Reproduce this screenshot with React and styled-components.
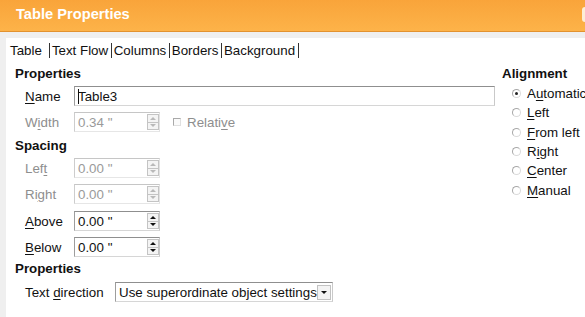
import React from "react";
import styled, { createGlobalStyle, css } from "styled-components";

const Global = createGlobalStyle`
  html, body { margin: 0; padding: 0; background: #efefef; }
  body { font-family: "Liberation Sans", Arial, sans-serif; }
  #root { width: 585px; height: 317px; overflow: hidden; }
`;

const Window = styled.div`
  width: 585px;
  height: 317px;
  display: flex;
  flex-direction: column;
  background: #efefef;
  font-family: "Liberation Sans", Arial, sans-serif;
  font-size: 13.33px;
  color: #111;
  overflow: hidden;
`;

const TitleBar = styled.div`
  height: 31px;
  flex: none;
  display: flex;
  align-items: flex-start;
  justify-content: space-between;
  background: linear-gradient(#f9a43a, #fdb349);
  border-bottom: 1px solid #e2922f;
  overflow: hidden;
`;

const Title = styled.div`
  padding: 5px 0 0 16px;
  line-height: 18px;
  font-size: 14.67px;
  font-weight: bold;
  color: #fff;
`;

const TitleButton = styled.div`
  width: 10px;
  height: 15px;
  margin: 7px -7px 0 0;
  border-radius: 3px;
  background: #fdeed6;
`;

const Body = styled.div`
  flex: 1;
  display: flex;
  padding: 6px 0 0 6px;
`;

const Panel = styled.div`
  flex: 1;
  display: flex;
  flex-direction: column;
  background: #fff;
`;

const TabStrip = styled.div`
  height: 24px;
  display: flex;
  align-items: center;
  padding-left: 4px;
`;

const Tab = styled.div`
  line-height: 15px;
  padding: 0 2.5px 0 2px;
  border-right: 1px solid #333;
  color: #111;
  ${(p) =>
    p.$active &&
    css`
      padding: 0 7px 0 0;
    `}
`;

const Content = styled.div`
  display: flex;
  gap: 6px;
`;

const LeftColumn = styled.div`
  width: 481px;
  padding-left: 9px;
  display: flex;
  flex-direction: column;
`;

const RightColumn = styled.div`
  flex: 1;
  display: flex;
  flex-direction: column;
`;

const Heading = styled.div`
  height: 20px;
  line-height: 20px;
  font-weight: bold;
  margin-top: ${(p) => p.$mt || 0}px;
`;

const FieldRow = styled.div`
  height: 20px;
  display: flex;
  align-items: center;
  padding-left: 10px;
  margin-top: ${(p) => p.$mt || 0}px;
`;

const Label = styled.div`
  width: ${(p) => p.$w || 49}px;
  flex: none;
  color: ${(p) => (p.$disabled ? "#8e8e8e" : "#111")};
`;

const Mn = styled.span`
  text-decoration: underline;
  text-underline-offset: 2px;
`;

const fieldBorder = css`
  box-sizing: border-box;
  height: 20px;
  border: 1px solid;
  border-color: ${(p) =>
    p.$disabled ? "#c6c6c6 #e2e2e2 #e6e6e6 #cdcdcd" : "#8f8f8f #c9c9c9 #d6d6d6 #9d9d9d"};
  background: #fff;
`;

const TextInput = styled.div`
  ${fieldBorder}
  flex: 1;
  margin-right: 1px;
  display: flex;
  align-items: center;
  padding-left: 3px;
  color: #111;
`;

const Caret = styled.span`
  display: inline-block;
  width: 1px;
  height: 15px;
  background: #111;
  margin-right: -1px;
`;

const SpinBox = styled.div`
  ${fieldBorder}
  width: 86px;
  flex: none;
  display: flex;
  align-items: stretch;
  padding: 1px 0 1px 3px;
  color: ${(p) => (p.$disabled ? "#9a9a9a" : "#111")};
`;

const SpinValue = styled.div`
  flex: 1;
  display: flex;
  align-items: center;
`;

const SpinButtons = styled.div`
  width: 12px;
  display: flex;
  flex-direction: column;
`;

const SpinHalf = styled.div`
  flex: 1;
  box-sizing: border-box;
  border: 1px solid #c4c4c4;
  background: #f4f4f4;
  display: flex;
  align-items: center;
  justify-content: center;
  & + & { border-top: none; }
`;

const Arrow = styled.span`
  width: 0;
  height: 0;
  border-left: 3px solid transparent;
  border-right: 3px solid transparent;
  ${(p) =>
    p.$up
      ? css`border-bottom: 3px solid ${p.$disabled ? "#b9b9b9" : "#111"};`
      : css`border-top: 3px solid ${p.$disabled ? "#b9b9b9" : "#111"};`}
`;

const CheckBox = styled.span`
  box-sizing: border-box;
  width: 8px;
  height: 8px;
  margin-left: 13px;
  margin-right: 6px;
  border: 1px solid;
  border-color: #a9a9a9 #e0e0e0 #e0e0e0 #a9a9a9;
  background: #fafafa;
`;

const CheckLabel = styled.span`
  color: #8e8e8e;
`;

const Select = styled.div`
  ${fieldBorder}
  width: 218px;
  flex: none;
  display: flex;
  align-items: center;
  padding: 0 1px 0 3px;
  color: #111;
`;

const SelectText = styled.div`
  flex: 1;
  white-space: nowrap;
`;

const SelectButton = styled.div`
  box-sizing: border-box;
  width: 14px;
  height: 15px;
  border: 1px solid #c2c2c2;
  background: #f3f3f3;
  display: flex;
  align-items: center;
  justify-content: center;
`;

const RadioRow = styled.div`
  height: 19.3px;
  display: flex;
  align-items: center;
  padding-left: 10px;
  gap: 6px;
  white-space: nowrap;
`;

const Radio = styled.span`
  box-sizing: border-box;
  width: 9px;
  height: 9px;
  flex: none;
  border-radius: 50%;
  border: 1px solid;
  border-color: #a8a8a8 #dadada #dadada #a8a8a8;
  background: #fff;
  display: flex;
  align-items: center;
  justify-content: center;
  &::after {
    content: "";
    width: 3px;
    height: 3px;
    border-radius: 50%;
    background: ${(p) => (p.$checked ? "#222" : "transparent")};
  }
`;

const tabs = ["Table", "Text Flow", "Columns", "Borders", "Background"];

function Spin({ value, disabled }) {
  return (
    <SpinBox $disabled={disabled}>
      <SpinValue>{value}</SpinValue>
      <SpinButtons>
        <SpinHalf>
          <Arrow $up $disabled={disabled} />
        </SpinHalf>
        <SpinHalf>
          <Arrow $disabled={disabled} />
        </SpinHalf>
      </SpinButtons>
    </SpinBox>
  );
}

const alignments = [
  ["A", "u", "tomatic", true],
  ["", "L", "eft"],
  ["", "F", "rom left"],
  ["R", "i", "ght"],
  ["", "C", "enter"],
  ["", "M", "anual"],
];

export default function App() {
  return (
    <>
      <Global />
      <Window>
        <TitleBar>
          <Title>Table Properties</Title>
          <TitleButton />
        </TitleBar>
        <Body>
          <Panel>
            <TabStrip>
              {tabs.map((t, i) => (
                <Tab key={t} $active={i === 0}>
                  {t}
                </Tab>
              ))}
            </TabStrip>
            <Content>
              <LeftColumn>
                <Heading $mt={2}>Properties</Heading>
                <FieldRow $mt={2}>
                  <Label>
                    <Mn>N</Mn>ame
                  </Label>
                  <TextInput>
                    <Caret />
                    Table3
                  </TextInput>
                </FieldRow>
                <FieldRow $mt={6}>
                  <Label $disabled>
                    W<Mn>i</Mn>dth
                  </Label>
                  <Spin value={'0.34 "'} disabled />
                  <CheckBox />
                  <CheckLabel>
                    Relati<Mn>v</Mn>e
                  </CheckLabel>
                </FieldRow>
                <Heading $mt={4}>Spacing</Heading>
                <FieldRow $mt={2}>
                  <Label $disabled>
                    Lef<Mn>t</Mn>
                  </Label>
                  <Spin value={'0.00 "'} disabled />
                </FieldRow>
                <FieldRow $mt={6}>
                  <Label $disabled>
                    Ri<Mn>g</Mn>ht
                  </Label>
                  <Spin value={'0.00 "'} disabled />
                </FieldRow>
                <FieldRow $mt={7}>
                  <Label>
                    <Mn>A</Mn>bove
                  </Label>
                  <Spin value={'0.00 "'} />
                </FieldRow>
                <FieldRow $mt={6}>
                  <Label>
                    <Mn>B</Mn>elow
                  </Label>
                  <Spin value={'0.00 "'} />
                </FieldRow>
                <Heading $mt={2}>Properties</Heading>
                <FieldRow $mt={3}>
                  <Label $w={90}>
                    Text <Mn>d</Mn>irection
                  </Label>
                  <Select>
                    <SelectText>Use superordinate object settings</SelectText>
                    <SelectButton>
                      <Arrow />
                    </SelectButton>
                  </Select>
                </FieldRow>
              </LeftColumn>
              <RightColumn>
                <Heading $mt={2}>Alignment</Heading>
                {alignments.map(([pre, m, post, checked]) => (
                  <RadioRow key={m + post}>
                    <Radio $checked={checked} />
                    <span>
                      {pre}
                      <Mn>{m}</Mn>
                      {post}
                    </span>
                  </RadioRow>
                ))}
              </RightColumn>
            </Content>
          </Panel>
        </Body>
      </Window>
    </>
  );
}
